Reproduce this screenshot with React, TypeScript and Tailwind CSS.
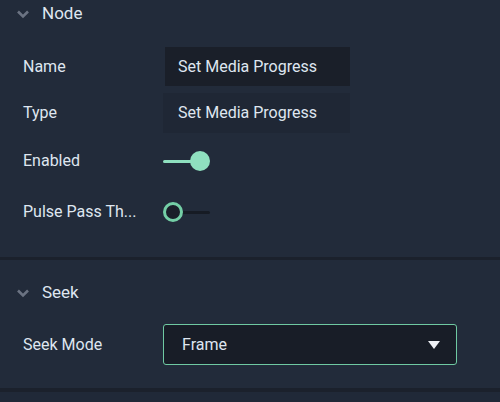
import React from "react";

function Chevron() {
  return (
    <svg width="14" height="10" viewBox="0 0 14 10" className="shrink-0">
      <path d="M2 2.5 L7 7.5 L12 2.5" fill="none" stroke="#6b7382" strokeWidth="2.6" strokeLinecap="butt" />
    </svg>
  );
}

function Header({ title }: { title: string }) {
  return (
    <div className="flex h-[28px] items-center pl-[16px]">
      <Chevron />
      <span className="ml-[12px] text-[17px] text-[#dfe6f0]">{title}</span>
    </div>
  );
}

export default function App() {
  return (
    <div
      className="flex h-[402px] w-[500px] flex-col overflow-hidden bg-[#222b3a] text-[#dfe6f0]"
      style={{ fontFamily: "Roboto, 'Liberation Sans', sans-serif" }}
    >
      {/* Section 1 */}
      <div className="flex h-[257px] flex-col">
        <Header title="Node" />
        <div className="mt-[19px] flex h-[39px] items-center">
          <span className="w-[165px] pl-[23px] text-[16px]">Name</span>
          <div className="flex h-full w-[185px] items-center bg-[#1a1f29] pl-[13px] text-[16px]">
            Set Media Progress
          </div>
        </div>
        <div className="mt-[7px] flex h-[40px] items-center">
          <span className="w-[163px] pl-[23px] text-[16px]">Type</span>
          <div className="flex h-full w-[187px] items-center bg-[#1f2735] pl-[15px] text-[16px]">
            Set Media Progress
          </div>
        </div>
        <div className="mt-[8px] flex h-[40px] items-center">
          <span className="w-[163px] pl-[23px] text-[16px]">Enabled</span>
          <div className="relative h-[20px] w-[48px]">
            <div className="absolute left-0 top-[8.5px] h-[3px] w-[30px] rounded-full bg-[#8fe0bf]" />
            <div className="absolute left-[27px] top-0 h-[20px] w-[20px] rounded-full bg-[#8fe0bf]" />
          </div>
        </div>
        <div className="mt-[11px] flex h-[40px] items-center">
          <span className="w-[163px] pl-[23px] text-[16px]">Pulse Pass Th...</span>
          <div className="relative h-[20px] w-[48px]">
            <div className="absolute left-[12px] top-[8.5px] h-[3px] w-[35px] rounded-full bg-[#161b24]" />
            <div className="absolute left-0 top-0 h-[20px] w-[20px] rounded-full border-[3px] border-[#74cfa6] bg-[#1a1f29]" />
          </div>
        </div>
      </div>
      <div className="h-[3px] bg-[#1b212c]" />
      {/* Section 2 */}
      <div className="flex h-[128px] flex-col pt-[19px]">
        <Header title="Seek" />
        <div className="mt-[17px] flex h-[41px] items-center">
          <span className="w-[163px] pl-[23px] text-[16px]">Seek Mode</span>
          <div className="flex h-full w-[294px] items-center justify-between rounded-[3px] border-[1.5px] border-[#6fc9a2] bg-[#181d27] pl-[18px] pr-[16px] text-[16px]">
            <span>Frame</span>
            <svg width="12" height="8" viewBox="0 0 12 8">
              <path d="M0 0 L12 0 L6 8 Z" fill="#eef1f6" />
            </svg>
          </div>
        </div>
      </div>
      <div className="h-[4px] bg-[#1b212c]" />
      <div className="flex-1 bg-[#202938]" />
    </div>
  );
}
